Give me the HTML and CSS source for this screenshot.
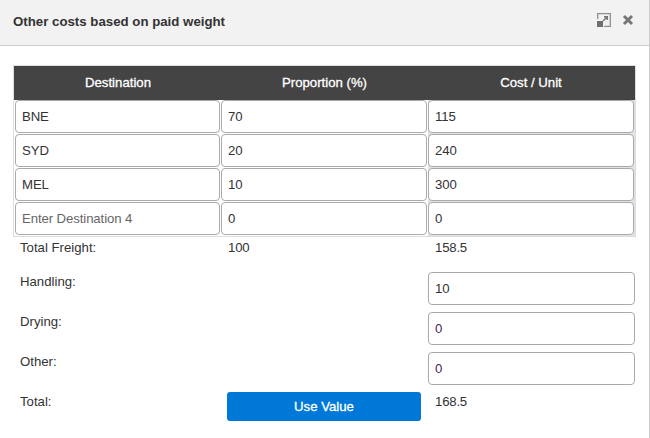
FILE: index.html
```html
<!DOCTYPE html>
<html lang="en">
<head>
	<meta charset="UTF-8">
	<title>Other costs</title>
	<link rel="stylesheet" href="styles.css">
</head>
<body>
	<div class="dialog">
		<div class="head">
			<span class="title">Other costs based on paid weight</span>
			<svg class="icon" width="14" height="14" viewBox="0 0 14 14">
				<path d="M4.5 .7H13.3V13.3H7M.7 6V.7H4.5" fill="none" stroke="#8a9299" stroke-width="1.3"/>
				<rect x="0" y="8" width="6" height="6" fill="#6f6f6f"/>
				<path d="M6 8L10.3 3.7M7 3.7H10.3V7" fill="none" stroke="#777" stroke-width="1.4"/>
			</svg>
			<svg class="icon close" width="12" height="12" viewBox="0 0 12 12">
				<path d="M2 2L10 10M10 2L2 10" fill="none" stroke="#777" stroke-width="3"/>
			</svg>
		</div>
		<div class="content">
			<div class="table">
				<div class="th">Destination</div>
				<div class="th">Proportion (%)</div>
				<div class="th th-last">Cost / Unit</div>
				<div class="td"><input class="inp" type="text" value="BNE"></div>
				<div class="td"><input class="inp" type="text" value="70"></div>
				<div class="td td-last"><input class="inp" type="text" value="115"></div>
				<div class="td"><input class="inp" type="text" value="SYD"></div>
				<div class="td"><input class="inp" type="text" value="20"></div>
				<div class="td td-last"><input class="inp" type="text" value="240"></div>
				<div class="td"><input class="inp" type="text" value="MEL"></div>
				<div class="td"><input class="inp" type="text" value="10"></div>
				<div class="td td-last"><input class="inp" type="text" value="300"></div>
				<div class="td"><input class="inp" type="text" placeholder="Enter Destination 4"></div>
				<div class="td"><input class="inp" type="text" value="0"></div>
				<div class="td td-last"><input class="inp" type="text" value="0"></div>
			</div>
			<div class="totals">
				<div class="lbl">Total Freight:</div>
				<div class="val">100</div>
				<div class="val">158.5</div>
			</div>
			<div class="row">
				<div class="lbl">Handling:</div>
				<div></div>
				<input class="inp extra" type="text" value="10">
			</div>
			<div class="row">
				<div class="lbl">Drying:</div>
				<div></div>
				<input class="inp extra purple" type="text" value="0">
			</div>
			<div class="row">
				<div class="lbl">Other:</div>
				<div></div>
				<input class="inp extra purple" type="text" value="0">
			</div>
			<div class="row">
				<div class="lbl">Total:</div>
				<button class="btn">Use Value</button>
				<div class="val">168.5</div>
			</div>
		</div>
	</div>
</body>
</html>
```

FILE: styles.css
```css
*{
	margin: 0;
	padding: 0;
	box-sizing: border-box;
}
body{
	width: 650px;
	height: 438px;
	overflow: hidden;
	background: #fff;
	font-family: "Liberation Sans", Arial, sans-serif;
	font-size: 13.2px;
	color: #333;
}
.dialog{
	height: 438px;
	border-right: 1px solid #ccc;
}
.head{
	height: 46px;
	background: #f2f2f2;
	border-bottom: 1px solid #ccc;
	display: flex;
	align-items: center;
	padding: 0 15px 2px 13px;
}
.title{
	flex: 1;
	font-weight: bold;
	font-size: 13.25px;
	color: #333;
}
.icon{
	display: block;
	margin-bottom: 4px;
}
.close{
	margin-left: 11px;
}
.content{
	padding: 19px 13px 0;
}
.table{
	width: 623px;
	display: grid;
	grid-template-columns: 206px 207px 207px;
	padding-left: 1px;
	border: 1px solid #ddd;
	background: #fff;
}
.th{
	height: 34px;
	background: #444;
	color: #fff;
	font-size: 13.2px;
	-webkit-text-stroke: .3px #fff;
	line-height: 34px;
	text-align: center;
	margin: 0 -1px;
}
.th-last{
	margin-right: 0;
}
.td{
	height: 34px;
	padding: 0 1px 1px 0;
}
.td-last{
	background: #dfe3e8;
}
.inp{
	width: 100%;
	height: 33px;
	display: block;
	border: 1px solid #aaa;
	border-radius: 4px;
	padding: 0 6px;
	font-family: "Liberation Sans", Arial, sans-serif;
	font-size: 13.2px;
	letter-spacing: -.1px;
	color: #333;
	background: #fff;
}
.inp::placeholder{
	color: #666;
	opacity: 1;
}
.totals{
	display: grid;
	grid-template-columns: 207px 207px 208px;
	height: 35px;
	padding: 1px 0 0 1px;
}
.row{
	display: grid;
	grid-template-columns: 207px 207px 208px;
	height: 40px;
	padding-left: 1px;
}
.lbl{
	padding-left: 6px;
	line-height: 20px;
}
.val{
	padding-left: 7px;
	line-height: 20px;
	letter-spacing: -.2px;
}
.extra{
	width: 207px;
}
.purple{
	color: #4b1d5e;
}
.btn{
	width: 194px;
	height: 29px;
	margin-left: 6px;
	border: 0;
	border-radius: 3px;
	background: #0078d7;
	color: #fff;
	font-family: "Liberation Sans", Arial, sans-serif;
	font-size: 13.2px;
	-webkit-text-stroke: .3px #fff;
}
```
